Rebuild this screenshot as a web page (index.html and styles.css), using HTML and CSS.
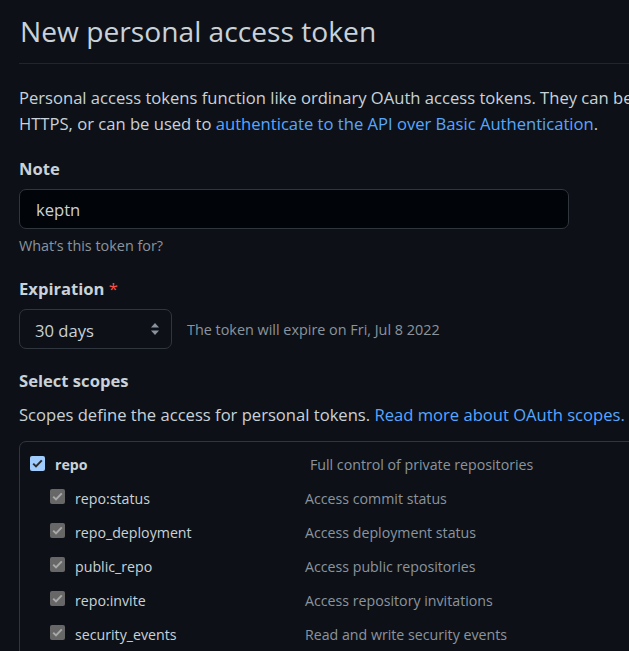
FILE: index.html
```html
<!DOCTYPE html>
<html lang="en">
<head>
<meta charset="utf-8">
<title>New personal access token</title>
<link rel="stylesheet" href="styles.css">
</head>
<body>
<main class="page">
  <div class="subhead">
    <h1 class="subhead-title">New personal access token</h1>
  </div>
  <p class="intro">Personal access tokens function like ordinary OAuth access tokens. They can be used instead of a password for Git over<br>HTTPS, or can be used to <a href="#">authenticate to the API over Basic Authentication</a>.</p>

  <div class="field">
    <label class="label">Note</label>
    <div class="input"><span>keptn</span></div>
    <p class="hint">What’s this token for?</p>
  </div>

  <div class="field field-exp">
    <label class="label">Expiration <span class="req">*</span></label>
    <div class="exp-row">
      <div class="select">
        <span>30 days</span>
        <svg class="arrows" width="10" height="14" viewBox="0 0 10 14"><path d="M5 1 L9 5.5 H1 Z" fill="#8b949e"/><path d="M5 13 L9 8.5 H1 Z" fill="#8b949e"/></svg>
      </div>
      <span class="exp-note">The token will expire on Fri, Jul 8 2022</span>
    </div>
  </div>

  <div class="field field-scopes">
    <label class="label">Select scopes</label>
    <p class="scopes-desc">Scopes define the access for personal tokens. <a href="#">Read more about OAuth scopes.</a></p>
    <div class="scope-box">
      <div class="row parent">
        <span class="cb cb-on"><svg width="11" height="9" viewBox="0 0 11 9"><path d="M1.2 4.6 L4 7.4 L9.8 1.4" fill="none" stroke="#2b2b2b" stroke-width="2"/></svg></span>
        <span class="name">repo</span>
        <span class="desc">Full control of private repositories</span>
      </div>
      <div class="row child">
        <span class="cb cb-dis"><svg width="11" height="9" viewBox="0 0 11 9"><path d="M1.2 4.6 L4 7.4 L9.8 1.4" fill="none" stroke="#a8a8a8" stroke-width="2"/></svg></span>
        <span class="name">repo:status</span>
        <span class="desc">Access commit status</span>
      </div>
      <div class="row child">
        <span class="cb cb-dis"><svg width="11" height="9" viewBox="0 0 11 9"><path d="M1.2 4.6 L4 7.4 L9.8 1.4" fill="none" stroke="#a8a8a8" stroke-width="2"/></svg></span>
        <span class="name">repo_deployment</span>
        <span class="desc">Access deployment status</span>
      </div>
      <div class="row child">
        <span class="cb cb-dis"><svg width="11" height="9" viewBox="0 0 11 9"><path d="M1.2 4.6 L4 7.4 L9.8 1.4" fill="none" stroke="#a8a8a8" stroke-width="2"/></svg></span>
        <span class="name">public_repo</span>
        <span class="desc">Access public repositories</span>
      </div>
      <div class="row child">
        <span class="cb cb-dis"><svg width="11" height="9" viewBox="0 0 11 9"><path d="M1.2 4.6 L4 7.4 L9.8 1.4" fill="none" stroke="#a8a8a8" stroke-width="2"/></svg></span>
        <span class="name">repo:invite</span>
        <span class="desc">Access repository invitations</span>
      </div>
      <div class="row child">
        <span class="cb cb-dis"><svg width="11" height="9" viewBox="0 0 11 9"><path d="M1.2 4.6 L4 7.4 L9.8 1.4" fill="none" stroke="#a8a8a8" stroke-width="2"/></svg></span>
        <span class="name">security_events</span>
        <span class="desc">Read and write security events</span>
      </div>
    </div>
  </div>
</main>
</body>
</html>
```
FILE: styles.css
```css
html, body {
  margin: 0;
  background: #0d1117;
  overflow: hidden;
}
body {
  font-family: "Open Sans", "Noto Sans", sans-serif;
  color: #c9d1d9;
  font-size: 16.6px;
}
a { color: #58a6ff; text-decoration: none; }
.page {
  width: 940px;
  padding: 11px 0 0 19px;
}
.subhead {
  border-bottom: 1px solid #21262d;
  padding-bottom: 12px;
}
.subhead-title {
  margin: 0;
  font-size: 28.2px;
  font-weight: 400;
  line-height: 40px;
  padding-left: 1px;
}
.intro {
  margin: 21px 0 0;
  line-height: 26px;
  white-space: nowrap;
}
.field { margin-top: 19px; }
.field-exp { margin-top: 20px; }
.field-scopes { margin-top: 19px; }
.label {
  display: block;
  font-weight: 700;
  line-height: 26px;
}
.req { color: #f85149; font-weight: 400; }
.input {
  margin-top: 7px;
  width: 532px;
  height: 38px;
  border: 1px solid #30363d;
  border-radius: 7px;
  background: #010409;
  display: flex;
  align-items: center;
  padding-left: 16px;
}
.hint {
  margin: 7px 0 0;
  font-size: 14.4px;
  line-height: 20px;
  color: #8b949e;
}
.exp-row {
  margin-top: 7px;
  display: flex;
  align-items: center;
  gap: 15px;
}
.select {
  box-sizing: border-box;
  width: 153px;
  height: 40px;
  border: 1px solid #30363d;
  border-radius: 7px;
  background: #0d1117;
  display: flex;
  align-items: center;
  justify-content: space-between;
  padding: 0 11px 0 15px;
}
.select span { padding-top: 2px; }
.exp-note {
  font-size: 14.4px;
  color: #8b949e;
}
.scopes-desc {
  margin: 8px 0 0;
  line-height: 26px;
  white-space: nowrap;
}
.scope-box {
  margin-top: 13px;
  border: 1px solid #30363d;
  border-radius: 7px;
  padding: 6px 0 40px 10px;
}
.row {
  display: flex;
  align-items: center;
  height: 34px;
  font-size: 14.2px;
}
.row.parent { height: 33px; }
.row.child { padding-left: 20px; }
.cb {
  width: 15px;
  height: 15px;
  border-radius: 2px;
  display: flex;
  align-items: center;
  justify-content: center;
  flex: none;
  margin-top: -3px;
}
.cb-on { background: #9fcbfd; }
.cb-dis { background: #676767; }
.name {
  margin-left: 10px;
  color: #c9d1d9;
}
.parent .name { width: 255px; font-weight: 700; }
.child .name { width: 230px; }
.desc { color: #8b949e; }
```
